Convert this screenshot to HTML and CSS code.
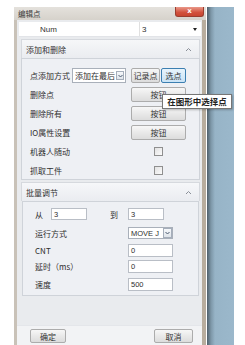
FILE: index.html
```html
<!DOCTYPE html>
<html>
<head>
<meta charset="utf-8">
<link rel="stylesheet" href="styles.css">
</head>
<body>
<div class="screen">
  <div class="window">
    <div class="titlebar">
      <span class="title">编辑点</span>
      <span class="close">x</span>
    </div>
    <div class="client">
      <div class="numrow">
        <span class="numlabel">Num</span>
        <div class="numsel"><span>3</span><span class="tri"></span></div>
      </div>

      <div class="section">
        <div class="sechead"><span>添加和删除</span>
          <svg class="caret" width="7" height="5" viewBox="0 0 7 5"><path d="M1 4 L3.5 1.5 L6 4" fill="none" stroke="#8a8f98" stroke-width="1"/></svg>
        </div>
        <div class="secbody s1">
          <div class="row">
            <span class="lbl">点添加方式</span>
            <div class="combo c1"><span class="ctext">添加在最后</span><span class="cbtn"><svg width="5" height="4" viewBox="0 0 5 4"><path d="M0.5 1 L2.5 3 L4.5 1" fill="none" stroke="#4a5a70" stroke-width="1"/></svg></span></div>
            <span class="btn b-rec">记录点</span>
            <span class="btn b-sel">选点</span>
          </div>
          <div class="row">
            <span class="lbl">删除点</span>
            <span class="btn b-wide">按钮</span>
          </div>
          <div class="row">
            <span class="lbl">删除所有</span>
            <span class="btn b-wide">按钮</span>
          </div>
          <div class="row">
            <span class="lbl">IO属性设置</span>
            <span class="btn b-wide">按钮</span>
          </div>
          <div class="row">
            <span class="lbl">机器人随动</span>
            <span class="chkcell"><span class="chk"></span></span>
          </div>
          <div class="row">
            <span class="lbl">抓取工件</span>
            <span class="chkcell"><span class="chk"></span></span>
          </div>
          <div class="tooltip">在图形中选择点</div>
        </div>
      </div>

      <div class="section sec2">
        <div class="sechead"><span>批量调节</span>
          <svg class="caret" width="7" height="5" viewBox="0 0 7 5"><path d="M1 4 L3.5 1.5 L6 4" fill="none" stroke="#8a8f98" stroke-width="1"/></svg>
        </div>
        <div class="secbody s2">
          <div class="r2 r-from">
            <span class="l-from">从</span>
            <span class="inp i-short">3</span>
            <span class="l-to">到</span>
            <span class="inp i-short">3</span>
          </div>
          <div class="r2 r-mode">
            <span class="l2">运行方式</span>
            <div class="combo c2"><span class="ctext">MOVE J</span><span class="cbtn"><svg width="5" height="4" viewBox="0 0 5 4"><path d="M0.5 1 L2.5 3 L4.5 1" fill="none" stroke="#4a5a70" stroke-width="1"/></svg></span></div>
          </div>
          <div class="r2 r-cnt">
            <span class="l2">CNT</span>
            <span class="inp i-long">0</span>
          </div>
          <div class="r2 r-delay">
            <span class="l2">延时（ms）</span>
            <span class="inp i-long">0</span>
          </div>
          <div class="r2 r-speed">
            <span class="l2">速度</span>
            <span class="inp i-long">500</span>
          </div>
        </div>
      </div>

      <div class="spacer"></div>
      <div class="footer">
        <span class="btn fbtn ok">确定</span>
        <span class="btn fbtn cancel">取消</span>
      </div>
    </div>
  </div>
  <div class="backdrop"></div>
</div>
</body>
</html>
```

FILE: styles.css
```css
html, body {
  margin: 0;
  padding: 0;
  background: #ffffff;
  overflow: hidden;
}
body {
  width: 245px;
  height: 345px;
  font-family: "Noto Sans CJK SC", "Liberation Sans", sans-serif;
  font-size: 8px;
  color: #2e2e2e;
}
.screen {
  display: flex;
  align-items: flex-start;
  padding-left: 14px;
  padding-top: 7px;
  height: 338px;
}
.window {
  width: 192px;
  height: 338px;
  display: flex;
  flex-direction: column;
  background: #d8d4ce;
}
.backdrop {
  width: 27px;
  height: 338px;
  margin-left: 1px;
  background: linear-gradient(90deg, #4f5f6a 0px, #7d97a8 4px, #97b4c7 8px, #9bb8cb 100%);
}
.titlebar {
  height: 13px;
  display: flex;
  align-items: flex-start;
  justify-content: space-between;
  background: linear-gradient(#e4e1dc, #d6d2cb);
}
.title {
  font-size: 7.5px;
  line-height: 13px;
  margin-left: 4px;
  color: #3a3a3a;
}
.close {
  width: 27px;
  height: 9px;
  margin-right: 2px;
  border: 1px solid #9a3d2e;
  border-top: none;
  border-radius: 0 0 3px 3px;
  background: linear-gradient(#e9998a, #d2513c 60%, #c8452f);
  color: #fff;
  font-family: "DejaVu Sans", sans-serif;
  font-weight: bold;
  font-size: 7px;
  line-height: 8px;
  text-align: center;
}
.client {
  flex: 1;
  display: flex;
  flex-direction: column;
  background: #e9ebee;
  border-left: 3px solid #c9c2b8;
  border-right: 4px solid #b8ad9e;
  padding-top: 2px;
}
.numrow {
  height: 14px;
  margin: 0 1px 0 2px;
  background: #ffffff;
  display: flex;
  align-items: center;
  border-bottom: 1px solid #e2e4e8;
}
.numlabel {
  font-family: "Liberation Sans", sans-serif;
  font-size: 8px;
  margin-left: 21px;
  width: 99px;
  color: #333;
}
.numsel {
  flex: 1;
  height: 14px;
  display: flex;
  align-items: center;
  justify-content: space-between;
  border-left: 1px solid #e0e0e0;
  font-family: "Liberation Sans", sans-serif;
  font-size: 8px;
  padding-left: 2px;
  padding-right: 4px;
}
.tri {
  width: 0;
  height: 0;
  border-left: 2.5px solid transparent;
  border-right: 2.5px solid transparent;
  border-top: 3px solid #222;
}
.section {
  margin: 2px 2px 0 4px;
}
.sechead {
  height: 18px;
  display: flex;
  align-items: center;
  justify-content: space-between;
  padding: 0 7px 0 4px;
  background: linear-gradient(#f6f7f9, #eaecf0);
  border: 1px solid #d6d9de;
  border-bottom: none;
  color: #333;
}
.secbody {
  position: relative;
  background: #eef0f4;
  border: 1px solid #cfd3d9;
}
.s1 {
  height: 122px;
  padding-top: 7px;
  box-sizing: border-box;
}
.row {
  height: 19px;
  display: flex;
  align-items: center;
  padding-left: 8px;
}
.lbl {
  width: 101px;
}
.row .lbl:first-child {
  flex: none;
}
.s1 .row:first-child .lbl {
  width: 42px;
}
.combo {
  display: flex;
  align-items: center;
  background: #fff;
  border: 1px solid #a9b0ba;
  box-sizing: border-box;
}
.c1 {
  width: 54px;
  height: 15px;
}
.ctext {
  flex: 1;
  padding-left: 2px;
  white-space: nowrap;
  overflow: hidden;
}
.cbtn {
  width: 8px;
  height: 9px;
  margin-right: 1px;
  border: 1px solid #a5aebb;
  background: linear-gradient(#f6f8fb, #dfe4ea);
  box-sizing: border-box;
  display: flex;
  align-items: center;
  justify-content: center;
}
.btn {
  display: flex;
  align-items: center;
  justify-content: center;
  box-sizing: border-box;
  height: 15px;
  border: 1px solid #acacac;
  border-radius: 2px;
  background: linear-gradient(#f7f7f7, #e9e9e9 50%, #dcdcdc);
  color: #333;
}
.b-rec {
  width: 29px;
  margin-left: 5px;
}
.b-sel {
  width: 25px;
  margin-left: 1px;
  border-color: #3c7fb1;
  background: linear-gradient(#e8f4fc, #c9e3f6);
}
.b-wide {
  width: 55px;
}
.chkcell {
  width: 55px;
  display: flex;
  justify-content: center;
}
.chk {
  width: 7px;
  height: 7px;
  border: 1px solid #8f8f8f;
  background: linear-gradient(135deg, #e2e2e2, #fbfbfb);
}
.tooltip {
  position: absolute;
  left: 140px;
  top: 35px;
  width: 70px;
  height: 15px;
  box-sizing: border-box;
  background: #ffffff;
  border: 1px solid #767676;
  box-shadow: 1px 1px 2px rgba(0,0,0,0.25);
  font-size: 8.5px;
  font-weight: bold;
  line-height: 13px;
  text-align: center;
  color: #222;
  white-space: nowrap;
  z-index: 2;
}
.s2 {
  height: 95px;
  margin: 0 1px;
  box-sizing: border-box;
  padding-top: 3px;
}
.r2 {
  display: flex;
  align-items: center;
  padding-left: 12px;
}
.r-from { height: 18px; }
.r-mode { height: 20px; }
.r-cnt { height: 15px; }
.r-delay { height: 16px; }
.r-speed { height: 21px; }
.l-from { width: 16px; }
.l-to { width: 18px; margin-left: 23px; }
.l2 { width: 93px; }
.inp {
  box-sizing: border-box;
  height: 12px;
  background: #ffffff;
  border: 1px solid #b9bec6;
  padding-left: 2px;
  display: flex;
  align-items: center;
  font-family: "Liberation Sans", sans-serif;
  font-size: 7.5px;
}
.i-short { width: 36px; }
.i-long { width: 45px; height: 13px; }
.c2 {
  width: 45px;
  height: 12px;
  font-family: "Liberation Sans", sans-serif;
  font-size: 7.5px;
}
.c2 .cbtn {
  width: 9px;
  height: 10px;
  margin-right: 0;
}
.spacer {
  flex: 1;
}
.footer {
  height: 20px;
  background: #f2f3f5;
  border-top: 1px solid #e4e6ea;
  display: flex;
  align-items: flex-start;
  padding-top: 3px;
  box-sizing: border-box;
}
.fbtn {
  height: 14px;
}
.ok {
  width: 36px;
  margin-left: 13px;
}
.cancel {
  width: 39px;
  margin-left: 88px;
}
```
